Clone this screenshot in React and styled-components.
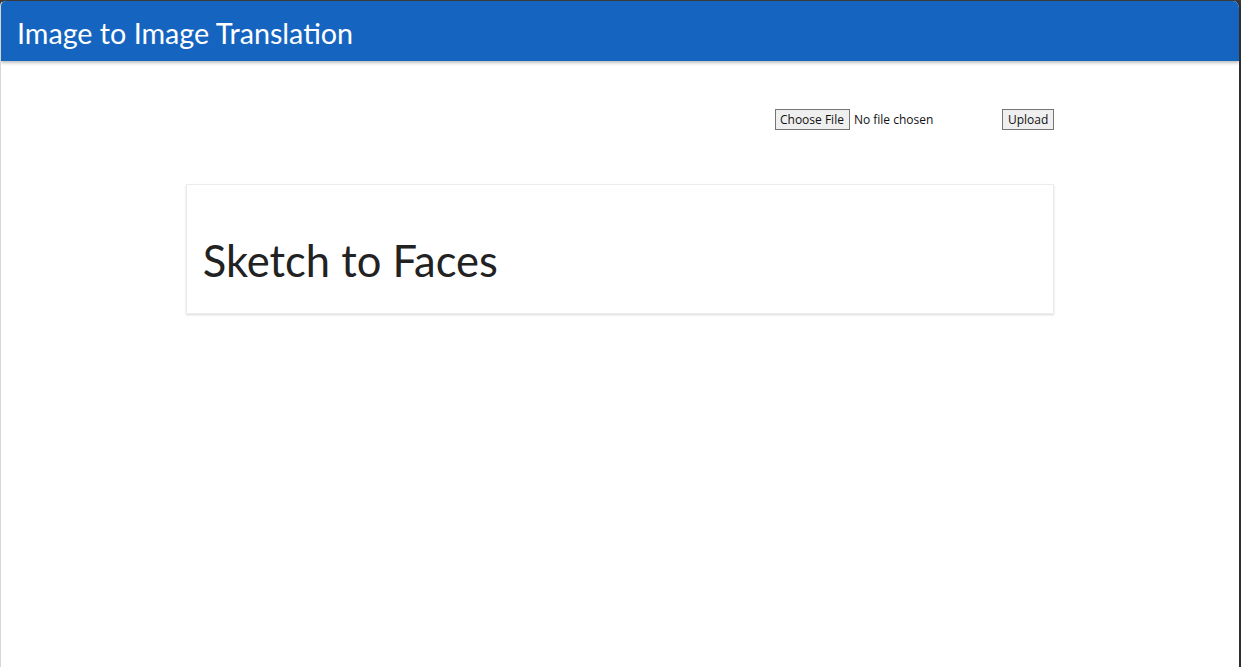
import styled, { createGlobalStyle } from "styled-components";

const GlobalStyle = createGlobalStyle`
  html, body {
    margin: 0;
    padding: 0;
    background: #3a3a3a;
  }
  #root {
    min-height: 100vh;
  }
`;

const Frame = styled.div`
  height: 100vh;
  box-sizing: border-box;
  background: #ffffff;
  border-top: 1px solid #3a3a3a;
  border-right: 2px solid #2e2e2e;
  border-left: 1px solid #d6d6d6;
  border-radius: 6px 8px 0 0;
  overflow: hidden;
`;

const Header = styled.header`
  height: 60px;
  box-sizing: border-box;
  padding: 3px 16px 0;
  background-color: #1565c0;
  display: flex;
  align-items: center;
  box-shadow: 0 2px 3px rgba(0, 0, 0, 0.25);
`;

const Brand = styled.h1`
  margin: 0;
  color: #ffffff;
  font-family: "Comic Sans MS", "Lato", cursive;
  font-size: 28.7px;
  font-weight: 400;
`;

const Main = styled.main`
  width: 70vw;
  margin: 0 auto;
  padding-top: 48px;
`;

const UploadRow = styled.form`
  display: flex;
  justify-content: flex-end;
  align-items: center;
  font-family: "Open Sans", "Liberation Sans", sans-serif;
  font-size: 12px;
  color: #111;
`;

const FileInput = styled.input`
  width: 227px;
  font: inherit;

  &::file-selector-button {
    font: inherit;
    background: #efefef;
    border: 1px solid #767676;
    border-radius: 0;
    padding: 1px 5px 1px 4px;
    margin-right: 4px;
    color: #111;
  }
`;

const Button = styled.button`
  font: inherit;
  background: #efefef;
  border: 1px solid #767676;
  border-radius: 0;
  padding: 1px 5px;
  color: #111;
  cursor: pointer;
`;

const Card = styled.section`
  margin-top: 54px;
  border: 1px solid #ececec;
  box-shadow: 0 1px 2px rgba(0, 0, 0, 0.15);
  padding: 46px 16px 24px;
`;

const Title = styled.h2`
  margin: 0;
  font-family: "Lato", "Open Sans", sans-serif;
  font-size: 43.5px;
  font-weight: 400;
  color: #222;
  line-height: 58px;
`;

function App() {
  return (
    <>
      <GlobalStyle />
      <Frame>
        <Header>
          <Brand>Image to Image Translation</Brand>
        </Header>
        <Main>
          <UploadRow onSubmit={(e) => e.preventDefault()}>
            <FileInput type="file" />
            <Button type="submit">Upload</Button>
          </UploadRow>
          <Card>
            <Title>Sketch to Faces</Title>
          </Card>
        </Main>
      </Frame>
    </>
  );
}

export default App;
